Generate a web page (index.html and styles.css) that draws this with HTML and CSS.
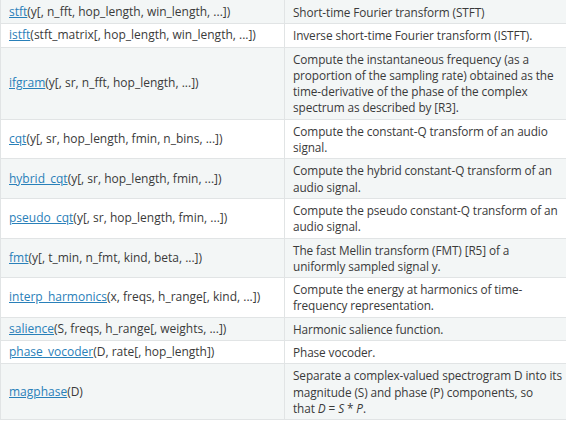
FILE: index.html
```html
<!DOCTYPE html>
<html>
<head>
<meta charset="utf-8">
<link rel="stylesheet" href="styles.css">
</head>
<body>
<table class="doc-table">
  <tbody>
    <tr class="odd first"><td class="sig"><a href="#">stft</a>(y[, n_fft, hop_length, win_length, ...])</td><td class="desc">Short-time Fourier transform (STFT)</td></tr>
    <tr class="even"><td class="sig"><a href="#">istft</a>(stft_matrix[, hop_length, win_length, ...])</td><td class="desc">Inverse short-time Fourier transform (ISTFT).</td></tr>
    <tr class="odd"><td class="sig"><a href="#">ifgram</a>(y[, sr, n_fft, hop_length, ...])</td><td class="desc">Compute the instantaneous frequency (as a proportion of the sampling rate) obtained as the time-derivative of the phase of the complex spectrum as described by [R3].</td></tr>
    <tr class="even"><td class="sig"><a href="#">cqt</a>(y[, sr, hop_length, fmin, n_bins, ...])</td><td class="desc">Compute the constant-Q transform of an audio signal.</td></tr>
    <tr class="odd"><td class="sig"><a href="#">hybrid_cqt</a>(y[, sr, hop_length, fmin, ...])</td><td class="desc">Compute the hybrid constant-Q transform of an audio signal.</td></tr>
    <tr class="even"><td class="sig"><a href="#">pseudo_cqt</a>(y[, sr, hop_length, fmin, ...])</td><td class="desc">Compute the pseudo constant-Q transform of an audio signal.</td></tr>
    <tr class="odd"><td class="sig"><a href="#">fmt</a>(y[, t_min, n_fmt, kind, beta, ...])</td><td class="desc">The fast Mellin transform (FMT) [R5] of a uniformly&nbsp;sampled signal y.</td></tr>
    <tr class="even"><td class="sig"><a href="#">interp_harmonics</a>(x, freqs, h_range[, kind, ...])</td><td class="desc">Compute the energy at harmonics of time-frequency representation.</td></tr>
    <tr class="odd"><td class="sig"><a href="#">salience</a>(S, freqs, h_range[, weights, ...])</td><td class="desc">Harmonic salience function.</td></tr>
    <tr class="even"><td class="sig"><a href="#">phase_vocoder</a>(D, rate[, hop_length])</td><td class="desc">Phase vocoder.</td></tr>
    <tr class="odd"><td class="sig"><a href="#">magphase</a>(D)</td><td class="desc">Separate a complex-valued spectrogram D into its magnitude (S) and phase (P) components, so <span class="nowrap">that <em>D</em> = <em>S</em> * <em>P</em>.</span></td></tr>
  </tbody>
</table>
</body>
</html>
```
FILE: styles.css
```css
html, body {
  margin: 0;
  padding: 0;
  background: #ffffff;
}
body {
  font-family: "Open Sans", "Noto Sans", sans-serif;
  font-size: 12px;
  color: #3a3a3a;
}
.doc-table {
  border-collapse: collapse;
  border-spacing: 0;
  width: 566px;
  table-layout: fixed;
  border-left: 1px solid #e1e4e5;
  border-bottom: 1px solid #e1e4e5;
}
.doc-table td {
  padding: 3px 8px 3px 8px;
  line-height: 16.3px;
  border-top: 1px solid #e1e4e5;
}
.doc-table .first td {
  border-top: none;
  padding-top: 4px;
}
.doc-table .sig {
  width: 267px;
  vertical-align: middle;
  border-right: 1px solid #e1e4e5;
  white-space: nowrap;
}
.doc-table .desc {
  vertical-align: top;
  padding-right: 0;
  font-size: 11.8px;
  letter-spacing: -0.1px;
}
.nowrap {
  white-space: nowrap;
}
.odd td {
  background: #f3f6f6;
}
.even td {
  background: #ffffff;
}
.doc-table a {
  color: #2980b9;
  text-decoration: underline;
}
```
